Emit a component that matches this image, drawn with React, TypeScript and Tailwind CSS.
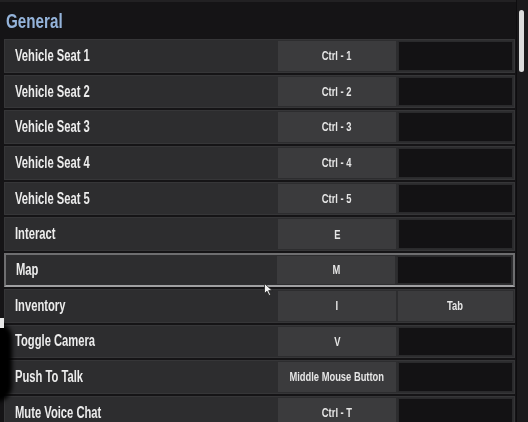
import React from "react"

type Binding = {
    label: string
    primary: string
    secondary?: string
    active?: boolean
}

const bindings: Binding[] = [
    { label: "Vehicle Seat 1", primary: "Ctrl - 1" },
    { label: "Vehicle Seat 2", primary: "Ctrl - 2" },
    { label: "Vehicle Seat 3", primary: "Ctrl - 3" },
    { label: "Vehicle Seat 4", primary: "Ctrl - 4" },
    { label: "Vehicle Seat 5", primary: "Ctrl - 5" },
    { label: "Interact", primary: "E" },
    { label: "Map", primary: "M", active: true },
    { label: "Inventory", primary: "I", secondary: "Tab" },
    { label: "Toggle Camera", primary: "V" },
    { label: "Push To Talk", primary: "Middle Mouse Button" },
    { label: "Mute Voice Chat", primary: "Ctrl - T" },
]

const font = {
    fontFamily: '"Liberation Sans", Arial, sans-serif',
}

const BindingRow: React.FC<{ item: Binding }> = ({ item }) => {
    const rowBorder = item.active
        ? "border-2 border-[#6e6e70] border-b-[#a0a0a2]"
        : "border border-[#363638]"

    return (
        <div className={`flex h-[33.7px] shrink-0 items-stretch bg-[#2d2d2f] ${rowBorder}`}>
            <div className="flex flex-1 items-center pl-[10px]">
                <span className="inline-block origin-left scale-x-[0.7] whitespace-nowrap text-[16px] font-bold text-[#ececec]">
                    {item.label}
                </span>
            </div>
            <div className="my-[1px] ml-[1px] flex w-[118px] items-center justify-center bg-[#3b3b3d]">
                <span className="inline-block scale-x-[0.72] whitespace-nowrap text-[13px] font-bold text-[#e6e6e6]">
                    {item.primary}
                </span>
            </div>
            <div className="w-[2px]" />
            <div
                className={`my-[1px] mr-[1px] flex w-[115px] items-center justify-center border ${
                    item.secondary ? "border-[#3b3b3d] bg-[#3b3b3d]" : "border-[#2a2a2c] bg-[#131214]"
                }`}
            >
                <span className="inline-block scale-x-[0.72] whitespace-nowrap text-[13px] font-bold text-[#e6e6e6]">
                    {item.secondary}
                </span>
            </div>
        </div>
    )
}

export default function App() {
    return (
        <div className="relative flex h-[422px] w-[528px] overflow-hidden bg-[#151416]" style={font}>
            <div className="flex flex-1 flex-col">
                <div className="flex h-[39px] shrink-0 items-center border-t-2 border-[#222123] pl-[6px]">
                    <h2 className="inline-block origin-left scale-x-[0.76] whitespace-nowrap text-[20px] font-bold text-[#94b3da]">
                        General
                    </h2>
                </div>
                <div className="flex flex-col gap-[2px] pl-[4px] pr-[1px]">
                    {bindings.map((b) => (
                        <BindingRow key={b.label} item={b} />
                    ))}
                </div>
            </div>

            {/* Barra de rolagem */}
            <div className="flex w-[12px] flex-col border-l border-[#0e0d0f] bg-[#1b1a1c] pt-[10px]">
                <div className="ml-[2px] h-[62px] w-[5px] rounded-full bg-[#dcdcdc]" />
            </div>

            {/* Cursor do mouse */}
            <svg className="absolute left-[264px] top-[283px]" width="9" height="13" viewBox="0 0 9 13">
                <path d="M0.5 0.5 L0.5 10.5 L3 8.2 L5 12.5 L6.6 11.7 L4.7 7.6 L8.2 7.6 Z" fill="#f2f2f2" stroke="#222" strokeWidth="0.8" />
            </svg>

            {/* Sombra na borda esquerda */}
            <div className="absolute left-[-4px] top-[322px] h-[80px] w-[16px] rounded-r-full bg-black blur-[2px]" />
            <div className="absolute left-0 top-[318px] h-[10px] w-[4px] bg-[#e8e8e8] blur-[0.5px]" />
        </div>
    )
}
